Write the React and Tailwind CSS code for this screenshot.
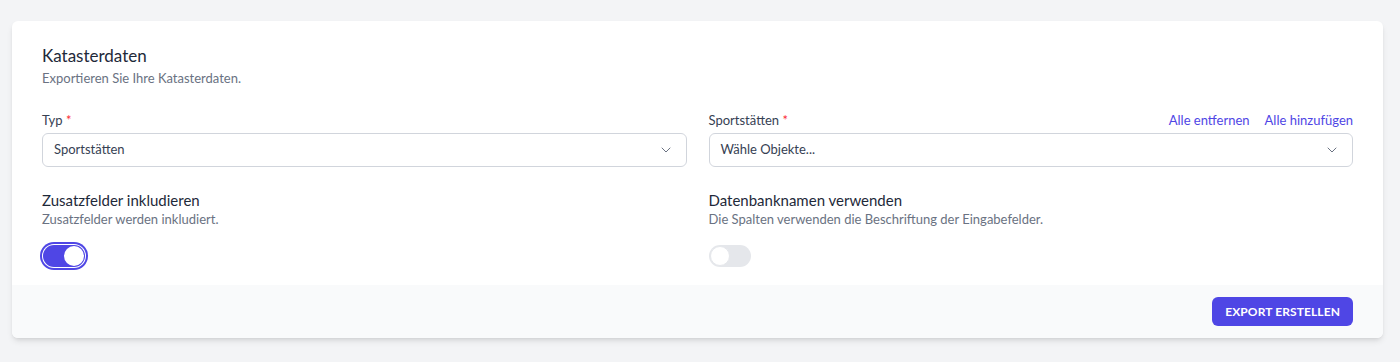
import React, { useState } from "react";
import { ChevronDown } from "lucide-react";

const font = { fontFamily: "Lato, 'Open Sans', sans-serif" };

// Select box with chevron
const SelectBox = ({ value }) => (
  <div className="flex h-[34px] items-center justify-between rounded-md border border-gray-300 bg-white pl-[11px] pr-[12px] text-[13px] text-gray-700">
    <span>{value}</span>
    <ChevronDown className="h-4 w-4 text-gray-500" strokeWidth={1.5} />
  </div>
);

// Toggle switch
const Toggle = ({ on, onClick }) => (
  <button
    onClick={onClick}
    className={`relative inline-flex h-[22px] w-[42px] shrink-0 items-center rounded-full transition-colors ${
      on ? "bg-[#4f46e5] ring-2 ring-[#4f46e5] ring-offset-1" : "bg-gray-200"
    }`}
  >
    <span
      className={`inline-block h-[20px] w-[20px] rounded-full bg-white transition-transform ${
        on ? "translate-x-[21px]" : "translate-x-[1px] border border-gray-200"
      }`}
    />
  </button>
);

export default function App() {
  const [extraFields, setExtraFields] = useState(true);
  const [dbNames, setDbNames] = useState(false);

  return (
    <div className="min-h-[362px] bg-gray-100 px-[12px] pt-[21px]" style={font}>
      <div className="w-[1371px] overflow-hidden rounded-md bg-white shadow-md">
        <div className="px-[30px] pt-[24px] pb-[13px]">
          <h2 className="text-[17px] leading-[22px] text-gray-800">Katasterdaten</h2>
          <p className="mt-[3px] text-[13px] leading-[16px] text-gray-500">
            Exportieren Sie Ihre Katasterdaten.
          </p>

          <div className="mt-[27px] grid grid-cols-2 gap-x-[22px]">
            {/* Typ */}
            <div>
              <div className="mb-[4px] flex h-[16px] items-center text-[13px] text-gray-700">
                Typ&nbsp;<span className="text-red-500">*</span>
              </div>
              <SelectBox value="Sportstätten" />
            </div>

            {/* Sportstätten */}
            <div>
              <div className="mb-[4px] flex h-[16px] items-center justify-between text-[13px]">
                <span className="text-gray-700">
                  Sportstätten <span className="text-red-500">*</span>
                </span>
                <div className="flex gap-[15px] text-[#4f46e5]">
                  <span>Alle entfernen</span>
                  <span>Alle hinzufügen</span>
                </div>
              </div>
              <SelectBox value="Wähle Objekte..." />
            </div>

            {/* Zusatzfelder */}
            <div className="mt-[23px]">
              <h3 className="text-[15px] leading-[20px] text-gray-800">Zusatzfelder inkludieren</h3>
              <p className="text-[13px] leading-[18px] text-gray-500">Zusatzfelder werden inkludiert.</p>
              <div className="mt-[17px] pl-[1px]">
                <Toggle on={extraFields} onClick={() => setExtraFields(!extraFields)} />
              </div>
            </div>

            {/* Datenbanknamen */}
            <div className="mt-[23px]">
              <h3 className="text-[15px] leading-[20px] text-gray-800">Datenbanknamen verwenden</h3>
              <p className="text-[13px] leading-[18px] text-gray-500">
                Die Spalten verwenden die Beschriftung der Eingabefelder.
              </p>
              <div className="mt-[17px]">
                <Toggle on={dbNames} onClick={() => setDbNames(!dbNames)} />
              </div>
            </div>
          </div>
        </div>

        {/* Footer */}
        <div className="flex justify-end bg-gray-50 px-[30px] py-[12px]">
          <button className="h-[29px] rounded-md bg-[#4f46e5] px-[13px] text-[12px] font-bold uppercase tracking-[0.1px] text-white">
            Export erstellen
          </button>
        </div>
      </div>
    </div>
  );
}
